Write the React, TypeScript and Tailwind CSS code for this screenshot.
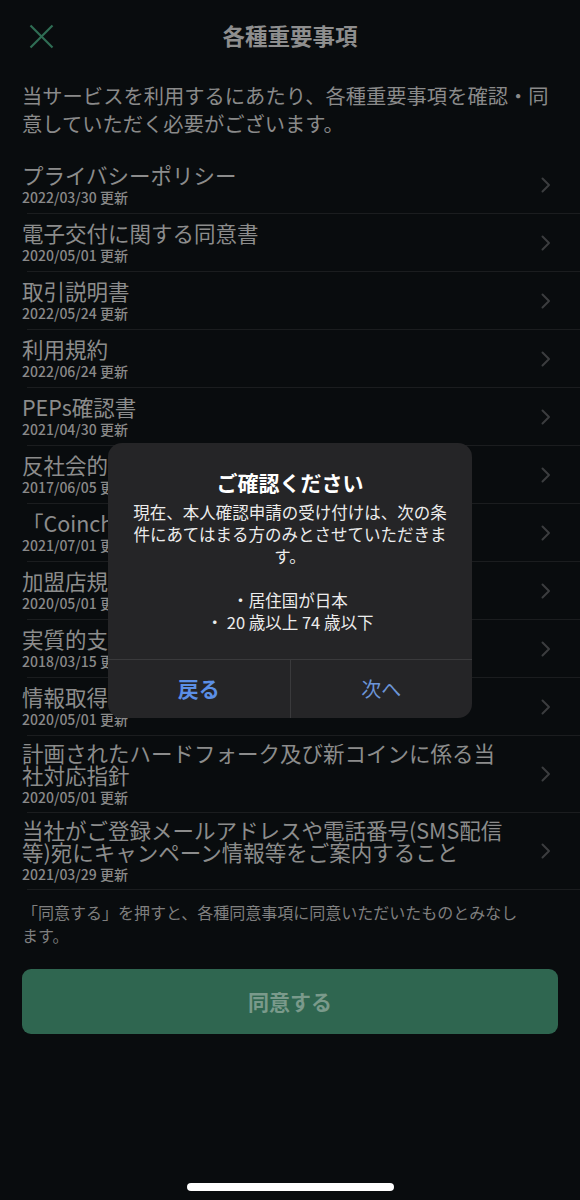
import React from "react";

type Doc = { title: string; date: string };

const docs: Doc[] = [
  { title: "プライバシーポリシー", date: "2022/03/30" },
  { title: "電子交付に関する同意書", date: "2020/05/01" },
  { title: "取引説明書", date: "2022/05/24" },
  { title: "利用規約", date: "2022/06/24" },
  { title: "PEPs確認書", date: "2021/04/30" },
  { title: "反社会的勢力ではないことの確約", date: "2017/06/05" },
  { title: "「Coincheckつみたて」規約", date: "2021/07/01" },
  { title: "加盟店規約", date: "2020/05/01" },
  { title: "実質的支配者に関する申告", date: "2018/03/15" },
  { title: "情報取得に関する同意書", date: "2020/05/01" },
  {
    title: "計画されたハードフォーク及び新コインに係る当社対応指針",
    date: "2020/05/01",
  },
  {
    title:
      "当社がご登録メールアドレスや電話番号(SMS配信等)宛にキャンペーン情報等をご案内すること",
    date: "2021/03/29",
  },
];

const font = { fontFamily: '"Noto Sans CJK JP", "Noto Sans", sans-serif' };

const Chevron = () => (
  <svg width="10" height="16" viewBox="0 0 10 16" fill="none">
    <polyline
      points="1.5,1.5 8,8 1.5,14.5"
      stroke="#3b3d3f"
      strokeWidth="2"
      strokeLinecap="round"
      strokeLinejoin="round"
    />
  </svg>
);

const DocRow = ({ doc }: { doc: Doc }) => (
  <div>
    <div className="flex items-center min-h-[57px] pl-[22px] pr-[29px] py-[6px]">
      <div className="w-[493px]">
        <p className="text-[21.5px] leading-[22px] text-[#8c8c8c]">{doc.title}</p>
        <p className="mt-[2px] text-[14px] leading-[18px] font-medium text-[#898989]">
          {doc.date} 更新
        </p>
      </div>
      <div className="ml-auto">
        <Chevron />
      </div>
    </div>
    <div className="ml-[27px] h-px bg-[#1b1d1f]" />
  </div>
);

const ConfirmDialog = () => (
  <div className="absolute left-[108px] top-[443px] w-[364px] rounded-[14px] bg-[#252527] overflow-hidden">
    <div className="px-[22px] pt-[25px] pb-[26px] text-center">
      <p className="text-[21px] leading-[28px] font-bold text-white">ご確認ください</p>
      <p className="mt-[5px] text-[16.5px] leading-[22px] text-[#ececec]">
        現在、本人確認申請の受け付けは、次の条件にあてはまる方のみとさせていただきます。
      </p>
      <p className="mt-[22px] text-[16.5px] leading-[22px] text-[#ececec]">・居住国が日本</p>
      <p className="text-[16.5px] leading-[22px] text-[#ececec]">・ 20 歳以上 74 歳以下</p>
    </div>
    <div className="flex h-[59px] border-t border-[#3a3a3c]">
      <button className="flex-1 text-[21px] font-bold text-[#5b8fe6]">戻る</button>
      <div className="w-px bg-[#3a3a3c]" />
      <button className="flex-1 text-[20px] text-[#6c95d8]">次へ</button>
    </div>
  </div>
);

export default function App() {
  return (
    <div className="relative flex flex-col min-h-[1200px] w-[580px] bg-[#090c0e]" style={font}>
      <div className="flex items-center h-[72px]">
        <div className="w-[80px] pl-[29px]">
          <svg width="25" height="25" viewBox="0 0 25 25">
            <line x1="1.5" y1="1.5" x2="23.5" y2="23.5" stroke="#2f6e55" strokeWidth="2.2" />
            <line x1="23.5" y1="1.5" x2="1.5" y2="23.5" stroke="#2f6e55" strokeWidth="2.2" />
          </svg>
        </div>
        <h1 className="flex-1 text-center text-[22.5px] font-bold text-[#8e8e8e]">各種重要事項</h1>
        <div className="w-[80px]" />
      </div>

      <p className="mt-[9px] px-[22px] text-[20.3px] leading-[28px] text-[#8a8a8a]">
        当サービスを利用するにあたり、各種重要事項を確認・同意していただく必要がございます。
      </p>

      <div className="mt-[19px]">
        {docs.map((doc) => (
          <DocRow key={doc.title} doc={doc} />
        ))}
      </div>

      <p className="mt-[11px] pl-[22px] pr-[52px] text-[16px] leading-[23px] text-[#7f7f7f]">
        「同意する」を押すと、各種同意事項に同意いただいたものとみなします。
      </p>

      <div className="px-[22px] mt-[22px]">
        <button className="w-full h-[65px] rounded-[9px] bg-[#2f6650] text-[21px] font-bold text-[#7a9a8b]">
          同意する
        </button>
      </div>

      <div className="mt-auto mb-[9px] mx-auto w-[207px] h-[8px] rounded-full bg-white" />

      <ConfirmDialog />
    </div>
  );
}
